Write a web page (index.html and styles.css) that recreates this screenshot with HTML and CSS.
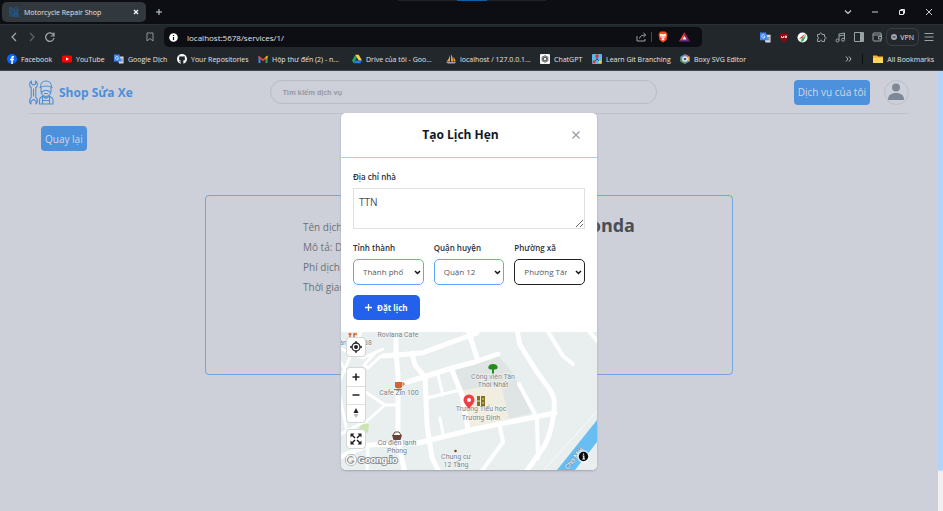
FILE: index.html
```html
<!DOCTYPE html>
<html lang="vi">
<head>
<meta charset="utf-8">
<meta name="viewport" content="width=device-width, initial-scale=1">
<title>Motorcycle Repair Shop</title>
<link rel="stylesheet" href="styles.css">
</head>
<body>
<svg class="defs" width="0" height="0" aria-hidden="true">
  <symbol id="mechanic" viewBox="0 0 25 25">
    <g fill="none" stroke="currentColor" stroke-width="1.100" stroke-linejoin="round" stroke-linecap="round">
      <path d="M2.500 1v3l2 1 2-1V1c2.500 1.500 2.500 5 .3 6.500v10c2.200 1.500 2.200 5 .2 6.500v-3l-2.500-1.500L2 21v3c-2-1.500-2-5 .2-6.500v-10C0 6 0 2.500 2.500 1z"/>
      <path d="M4.500 9v7"/>
      <path d="M11.500 7c0-3.500 2.300-6 5.500-6s5.500 2.500 5.500 6M11 7.500c4-2 8-2 12 0M12 8v3c0 3 2.200 5.500 5 5.500s5-2.500 5-5.500V8M13 12l2.500-1.500h3L21 12M15.500 13.500h3"/>
      <path d="M10.500 24v-4c0-2 2-3.300 3.500-3.800l3 2.300 3-2.300c1.500.5 4 1.800 4 3.800v4zM13.500 17v7M20.500 17v7M13.500 20.500h7"/>
    </g>
  </symbol>
  <symbol id="translate" viewBox="0 0 12 12">
    <path d="M4 3h7.500v8.500H6z" fill="#d5d9e0"/><path d="M0 .5h6.500L9 9H0z" fill="#4285f4"/>
    <path d="M5 3.600A1.800 1.800 0 1 0 5.400 5H4" fill="none" stroke="#fff" stroke-width=".8"/><path d="M8 6h3M9.700 6 9 9M9 7l2 2.500" stroke="#70757c" stroke-width=".7" fill="none"/>
  </symbol>
</svg>

<header class="browser">
  <div class="tabs">
    <div class="tab">
      <svg class="fav" viewBox="0 0 25 25"><use href="#mechanic"/></svg>
      <span class="tab-title">Motorcycle Repair Shop</span>
      <button class="plain" aria-label="Close tab"><svg width="6" height="6" viewBox="0 0 6 6"><path d="m1 1 4 4m0-4L1 5" stroke="#fff" stroke-width="1.200"/></svg></button>
    </div>
    <button class="plain" aria-label="New tab"><svg width="8" height="8" viewBox="0 0 8 8"><path d="M4 1v6M1 4h6" stroke="#d5dadd"/></svg></button>
    <div class="notch"></div>
    <div class="window-buttons">
      <button class="plain" aria-label="Search tabs"><svg width="8" height="8" viewBox="0 0 8 8"><path d="m1 2.500 3 3 3-3" fill="none" stroke="#c9cdd0" stroke-width="1.200"/></svg></button>
      <button class="plain" aria-label="Minimize"><svg width="8" height="8" viewBox="0 0 8 8"><path d="M1 4h6" stroke="#c9cdd0"/></svg></button>
      <button class="plain" aria-label="Restore"><svg width="8" height="8" viewBox="0 0 8 8"><path d="M1.500 2.500h4v4h-4zM2.500 1.500h4v4" fill="none" stroke="#e4e6e8"/></svg></button>
      <button class="plain" aria-label="Close"><svg width="8" height="8" viewBox="0 0 8 8"><path d="m1 1 6 6m0-6L1 7" stroke="#c9cdd0"/></svg></button>
    </div>
  </div>
  <div class="toolbar">
    <nav class="history" aria-label="History">
      <button class="plain" aria-label="Back"><svg width="10" height="12" viewBox="0 0 10 12"><path d="M7 2 3 6l4 4" fill="none" stroke="#a5acb0" stroke-width="1.200"/></svg></button>
      <button class="plain" aria-label="Forward"><svg width="10" height="12" viewBox="0 0 10 12"><path d="m3 2 4 4-4 4" fill="none" stroke="#5d6569" stroke-width="1.200"/></svg></button>
      <button class="plain" aria-label="Reload"><svg width="10" height="12" viewBox="0 0 10 12"><path d="M8.500 4A4.200 4.200 0 1 0 9 7M9 1.500V5H5.800" fill="none" stroke="#a5acb0" stroke-width="1.200"/></svg></button>
    </nav>
    <button class="plain" aria-label="Bookmark"><svg width="8" height="10" viewBox="0 0 8 10"><path d="M1 1h6v8L4 6.500 1 9z" fill="none" stroke="#8e969a"/></svg></button>
    <div class="address">
      <svg width="9" height="9" viewBox="0 0 9 9"><circle cx="4.500" cy="4.500" r="4.300" fill="#fff"/><path d="M4.500 4v3M4.500 2v1" stroke="#111" stroke-width="1.200"/></svg>
      <input class="url" type="text" aria-label="Address" value="localhost:5678/services/1/">
      <svg width="11" height="10" viewBox="0 0 11 10"><path d="M1 4v5h8V7M3.500 6.500C4 4 6 3 9.500 3M7.500 1l2.200 2-2.200 2" fill="none" stroke="#9ca2a6"/></svg>
      <span class="bar"></span>
      <svg width="10" height="12" viewBox="0 0 10 12"><path d="M2.500.5h5L9.500 3 8.500 9 5 11.500 1.500 9 .5 3z" fill="#f4501e"/><path d="m2 3 1.500 0L5 3.500 6.500 3 8 3 7.500 6 6 7l.5 1.500L5 9.500 3.500 8.500 4 7 2.500 6z" fill="#fff"/><path d="M3 5l1.500.5M7 5l-1.500.5M5 6v1.500" stroke="#f4501e" stroke-width=".7"/></svg>
      <svg class="bat" width="11" height="10" viewBox="0 0 11 10"><path d="M5.500 0 0 9.500l5.500-3z" fill="#ff4724"/><path d="M5.500 0 11 9.500l-5.500-3z" fill="#9e1f63"/><path d="M0 9.500h11l-5.500-3z" fill="#662d91"/><path d="m5.500 4 2 3.500h-4z" fill="#fff"/></svg>
    </div>
    <div class="extensions">
      <svg width="11" height="11"><use href="#translate"/></svg>
      <svg width="10" height="11" viewBox="0 0 10 11"><path d="M5 .5C6.500 1.500 8 1.700 9.500 1.800 9.500 6 8.500 8.500 5 10.500 1.500 8.500.5 6 .5 1.800 2 1.700 3.500 1.500 5 .5z" fill="#8d0710"/><path d="M2.500 4v1.500h2V4M6 4v1.500h1.500V4H6" fill="none" stroke="#fff" stroke-width=".8"/></svg>
      <svg width="11" height="11" viewBox="0 0 11 11"><circle cx="5.500" cy="5.500" r="5" fill="#fff"/><path d="M1.500 7.500 8 1.500 5 6z" fill="#e32020"/><path d="M9.500 2 5.500 6.500l-2 3.500 3-1z" fill="#18b838"/><path d="m3 9 5.500-7L5 7z" fill="#111"/></svg>
      <svg width="11" height="11" viewBox="0 0 11 11"><path d="M1.500 2.500h2C3 1 6 0 6 2.500h2.500V5c2-.5 2 2.500 0 2v2.500H6C6 7.500 4 7.500 4 9.500H1.500V7c1.500 0 1.500-2 0-2z" fill="none" stroke="#98a4a3"/></svg>
      <svg width="11" height="11" viewBox="0 0 11 11"><path d="M4 8.500V2l5.500-1v6.500M4 4l5.500-1" fill="none" stroke="#98a4a3"/><circle cx="2.500" cy="8.500" r="1.500" fill="none" stroke="#98a4a3"/><circle cx="8" cy="7.700" r="1.500" fill="none" stroke="#98a4a3"/></svg>
      <svg width="10" height="10" viewBox="0 0 10 10"><path d="M.5.500h9v9h-9z" fill="none" stroke="#98a4a3"/><path d="M6 1h3v8H6z" fill="#98a4a3"/></svg>
      <svg width="11" height="10" viewBox="0 0 11 10"><path d="M9 3V1H2a1 1 0 0 0-1 1v6a1 1 0 0 0 1 1h7V7M1 3h8.500v4H6.500V4.500h3" fill="none" stroke="#98a4a3"/></svg>
    </div>
    <button class="vpn"><svg width="6" height="6" viewBox="0 0 6 6"><circle cx="3" cy="3" r="3" fill="#a6a7b4"/><path d="M1.500 3h3" stroke="#22272b"/></svg>VPN</button>
    <button class="plain" aria-label="Menu"><svg width="10" height="10" viewBox="0 0 10 10"><path d="M.5 1.500h9M.5 5h9M.5 8.500h9" stroke="#98a4a3"/></svg></button>
  </div>
  <nav class="bookmarks" aria-label="Bookmarks">
    <div class="links">
      <a href="#"><svg viewBox="0 0 10 10"><circle cx="5" cy="5" r="5" fill="#0866ff"/><path d="M4.300 10V6.300H3V4.800h1.300v-1C4.300 2.400 5.200 1.800 7 2.100v1.300c-.9-.1-1.200.1-1.200.7v.7H7l-.2 1.500h-1V10z" fill="#fff"/></svg>Facebook</a>
      <a href="#"><svg viewBox="0 0 10 10"><rect y="1.500" width="10" height="7" rx="1.500" fill="#f00"/><path d="m4 3.500 3 1.500-3 1.500z" fill="#fff"/></svg>YouTube</a>
      <a href="#"><svg><use href="#translate"/></svg>Google Dịch</a>
      <a href="#"><svg viewBox="0 0 10 10"><circle cx="5" cy="5" r="5" fill="#fff"/><path d="M3.700 10V8.200c-1 .2-1.500-.3-1.800-1l1.800.3.300-.7C2.500 6.500 1.900 5.700 2 4.300L2.500 3V2l1.300.5h2.400L7.500 2v1L8 4.300c.1 1.400-.5 2.200-2 2.500l.4.900V10z" fill="#22272b"/></svg>Your Repositories</a>
      <a href="#"><svg viewBox="0 0 10 10"><path d="M.5 2v7h2V4z" fill="#4285f4"/><path d="M9.500 2v7h-2V4z" fill="#34a853"/><path d="M.5 1.500 5 5l4.500-3.500v2L5 7.200.5 3.500z" fill="#ea4335"/><path d="M7.500 3 9.500 1.500v2.200l-2 1.500z" fill="#fbbc04"/></svg>Hộp thư đến (2) - n...</a>
      <a href="#"><svg viewBox="0 0 10 10"><path d="M3.300.8 0 6.500l1.700 2.700L5 3.500z" fill="#16a765"/><path d="M3.300.8h3.400L10 6.500H6.700z" fill="#ffcf48"/><path d="M3.400 6.500H10L8.300 9.200H1.700z" fill="#2878ee"/></svg>Drive của tôi - Goo...</a>
      <a href="#"><svg viewBox="0 0 10 10"><path d="M4 1C3.500 3.500 2 6 .5 7.500H4zM5 .5v7h2C7 4.500 6.300 2 5 .5zM7.500 3v4.500h2C9.400 5.800 8.500 4 7.500 3z" fill="#f3a33d"/><path d="M0 8h10L8.700 9.500H2z" fill="#a5a2bc"/></svg>localhost / 127.0.0.1...</a>
      <a href="#"><svg viewBox="0 0 10 10"><rect width="10" height="10" rx="1" fill="#f5f5f5"/><g fill="none" stroke="#333" stroke-width=".6"><ellipse cx="5" cy="5" rx="1.600" ry="3.500"/><ellipse cx="5" cy="5" rx="1.600" ry="3.500" transform="rotate(60 5 5)"/><ellipse cx="5" cy="5" rx="1.600" ry="3.500" transform="rotate(120 5 5)"/></g></svg>ChatGPT</a>
      <a href="#"><svg viewBox="0 0 10 10"><rect width="10" height="10" rx="1" fill="#58b9ed"/><path d="M5 2v3L2 8M5 5l3 3" stroke="#174d86" fill="none"/><circle cx="5" cy="2" r="1.700" fill="#e92d31"/><circle cx="2" cy="7.800" r="1.500" fill="#e92d31"/><circle cx="8" cy="7.800" r="1.500" fill="#f2cc31"/></svg>Learn Git Branching</a>
      <a href="#"><svg viewBox="0 0 10 10"><path d="m5 0 4.500 2.500v5L5 10 .5 7.500v-5z" fill="#5b8bd1"/><path d="m.5 2.500 4.500 2.500v5L.5 7.500z" fill="#57a15c"/><path d="m5 5 4.500-2.500v5z" fill="#e3bd4a"/><path d="m5 0 4.500 2.500L7 4z" fill="#dc6b57"/><circle cx="5" cy="5" r="2.800" fill="#e9ebf1"/><circle cx="5" cy="5" r="1.300" fill="#48506a"/></svg>Boxy SVG Editor</a>
    </div>
    <div class="more">
      <button class="plain" aria-label="More bookmarks"><svg width="7" height="6" viewBox="0 0 7 6"><path d="m1 .5 2 2.500-2 2.500M4 .5 6 3 4 5.500" fill="none" stroke="#b3b8bb"/></svg></button>
      <span class="bar dark"></span>
      <a href="#"><svg viewBox="0 0 10 10"><path d="M0 1.500h4l1 1h5V9H0z" fill="#f5b92d"/><path d="M0 4h10v5H0z" fill="#ffd55c"/></svg>All Bookmarks</a>
    </div>
  </nav>
</header>

<div class="viewport">
  <div class="page">
    <header class="site-header">
      <a class="brand" href="#"><svg width="25" height="25"><use href="#mechanic"/></svg>Shop Sửa Xe</a>
      <input class="search" type="search" aria-label="Tìm kiếm dịch vụ" placeholder="Tìm kiếm dịch vụ">
      <div class="account">
        <button class="primary">Dịch vụ của tôi</button>
        <button class="avatar" aria-label="Tài khoản"><svg width="16" height="18" viewBox="0 0 16 18"><circle cx="8" cy="4.500" r="4" fill="#7f8896"/><path d="M0 17c0-5 3-7 8-7s8 2 8 7z" fill="#7f8896"/></svg></button>
      </div>
    </header>
    <main class="content">
      <button class="primary back">Quay lại</button>
      <section class="service">
        <div class="facts">
          <p>Tên dịch vụ</p>
          <p>Mô tả: Dịch</p>
          <p>Phí dịch vụ</p>
          <p>Thời gian</p>
        </div>
        <h1>Honda</h1>
      </section>
    </main>
    <div class="overlay">
      <div class="modal" role="dialog" aria-labelledby="modal-title">
        <div class="modal-head">
          <h2 id="modal-title">Tạo Lịch Hẹn</h2>
          <button class="plain" aria-label="Đóng"><svg width="8" height="8" viewBox="0 0 8 8"><path d="m.5.5 7 7m0-7-7 7" stroke="#959ba6" stroke-width="1.200"/></svg></button>
        </div>
        <form class="form">
          <div class="field home">
            <label for="address">Địa chỉ nhà</label>
            <textarea id="address">TTN</textarea>
          </div>
          <div class="places">
            <div class="field">
              <label for="city">Tỉnh thành</label>
              <div class="select"><select id="city"><option>Thành phố</option></select><svg width="7" height="5" viewBox="0 0 7 5"><path d="m1 1 2.500 2.500L6 1" fill="none" stroke="#111" stroke-width="1.500"/></svg></div>
            </div>
            <div class="field">
              <label for="district">Quận huyện</label>
              <div class="select"><select id="district"><option>Quận 12</option></select><svg width="7" height="5" viewBox="0 0 7 5"><path d="m1 1 2.500 2.500L6 1" fill="none" stroke="#111" stroke-width="1.500"/></svg></div>
            </div>
            <div class="field">
              <label for="ward">Phường xã</label>
              <div class="select current"><select id="ward"><option>Phường Tân</option></select><svg width="7" height="5" viewBox="0 0 7 5"><path d="m1 1 2.500 2.500L6 1" fill="none" stroke="#111" stroke-width="1.500"/></svg></div>
            </div>
          </div>
          <button class="submit" type="button"><svg width="7" height="7" viewBox="0 0 7 7"><path d="M3.500 0v7M0 3.500h7" stroke="#fff" stroke-width="1.300"/></svg>Đặt lịch</button>
        </form>
        <div class="map">
          <svg class="map-art" viewBox="0 0 256 138" preserveAspectRatio="xMidYMid slice">
            <rect width="256" height="138" fill="#e9efef"/>
            <path d="m113 35 44-12 14 17 20 41-64 16z" fill="#dfe5e5"/>
            <path d="m118 59 42-7 8 35-41 10z" fill="#f1eee1"/>
            <path d="M19 92h9l-1 9-9-2z" fill="#cbe5b0"/>
            <g fill="none" stroke="#fff" stroke-width="5" stroke-linejoin="round" stroke-linecap="round">
              <path d="M55-2v22l2 23v57l2 20 5 20M42 24l39-3 55-20M57 53l54-17 23-6 23-8M-3 126l30-13 50-2 57-14 80-16"/>
              <path d="m71 21 3 12 10 12 2 48 5 33 7 14M111 38l10 25 6 35M127-2l9 28M176-2l3 15 17 27c10 14 16 20 17 28s0 11-1 18-4 19-8 27l-19 27"/>
              <path d="m178 52 18 34 1 40M159 95l3 15-22 30M206-2l16 26 10 8M247-2l12 14" stroke-width="4"/>
              <path d="m97 43 5 20M86 66l33-8M99 86l3 16M-2 28l16 25 30 20h12M44 73 27 88l-29 15M21-2-2 50M-2 16l24 10 20-9M27 36l13-12M27 36l-4-3 12-13M27 113l-1 27M-2 60l8 40" stroke-width="3"/>
            </g>
            <path d="m202 139 56-62" stroke="#f8fafa"/>
            <path d="m216 138 40-50v22l-22 28z" fill="#68bdf2"/>
            <g class="places-text" text-anchor="middle">
              <text x="57" y="5">Roviana Cafe</text><text x="2" y="13">án</text><text x="27" y="13">38</text>
              <text x="58" y="63">Cafe Zin 100</text>
              <text x="56" y="113">Cơ điện lạnh</text><text x="56" y="121">Phong</text>
              <text x="115" y="127">Chung cư</text><text x="115" y="135">12 Tầng</text>
              <text x="152" y="47">Công viên Tân</text><text x="152" y="55">Thới Nhất</text>
              <text x="140" y="79">Trường Tiểu học</text><text x="140" y="88">Trương Định</text>
              <text class="river" x="235" y="128" transform="rotate(-51 235 128)">Chợ Mới</text>
            </g>
            <path d="M9 1v6M13 1v6M7.500 2h3M13 2h3" stroke="#dc632d" stroke-width="1.500"/>
            <path d="M54 50h7v5c-2 2-5 2-7 0z" fill="#d7642c"/><path d="M61 51h2v2h-2M53 57.500h8" fill="none" stroke="#d7642c"/>
            <path d="m52 103 2-3h4l2 3" fill="none" stroke="#684333"/><path d="M51 103h10l-1.500 5h-7z" fill="#684333"/>
            <circle cx="114.500" cy="119" r="1.300" fill="#82432e"/>
            <path d="M151 41.500v-4c-3 .5-4-1-3.500-3 .5-1.500 2-2.500 4.500-2.500s4 1 4.500 2.500c.5 2-1 3.500-3.500 3v4z" fill="#258b1d"/>
            <path d="M136 64h3v10h-3zM140 64h4v10h-4z" fill="#83711d"/><path d="M136 69h3M142 66v2M142 70v2" stroke="#eee0a0"/>
            <path d="M128 77c-3-4-5.500-6-5.500-9a5.500 5.500 0 0 1 11 0c0 3-2.500 5-5.500 9z" fill="#ed4047"/><circle cx="128" cy="68" r="2" fill="#fff"/>
          </svg>
          <div class="controls">
            <div class="group"><button aria-label="Vị trí của tôi"><svg width="12" height="12" viewBox="0 0 12 12"><circle cx="6" cy="6" r="4" fill="none" stroke="#222" stroke-width="1.300"/><circle cx="6" cy="6" r="2" fill="#222"/><path d="M6 0v2M6 10v2M0 6h2M10 6h2" stroke="#222" stroke-width="1.300"/></svg></button></div>
            <div class="group zoom">
              <button aria-label="Phóng to"><svg width="8" height="8" viewBox="0 0 8 8"><path d="M4 .5v7M.5 4h7" stroke="#222" stroke-width="1.600"/></svg></button>
              <button aria-label="Thu nhỏ"><svg width="8" height="8" viewBox="0 0 8 8"><path d="M.5 4h7" stroke="#222" stroke-width="1.600"/></svg></button>
              <button aria-label="Hướng bắc"><svg width="6" height="12" viewBox="0 0 6 12"><path d="m3 1 2.500 5h-5z" fill="#222"/><path d="m3 11 2.500-4h-5z" fill="#bbb"/></svg></button>
            </div>
            <div class="group"><button aria-label="Toàn màn hình"><svg width="12" height="12" viewBox="0 0 12 12"><path d="M.5 4.500v-4h4zM7.500.5h4v4zM11.500 7.500v4h-4zM4.500 11.500h-4v-4z" fill="#222"/><path d="m2 2 3 3M10 2 7 5M10 10 7 7M2 10l3-3" stroke="#222" stroke-width="1.500"/></svg></button></div>
          </div>
          <a class="goong" href="#"><svg width="12" height="12" viewBox="0 0 12 12"><circle cx="6" cy="6" r="5.500" fill="#f4f4f4" stroke="#777" stroke-width=".8"/><path d="M8.500 4A3.300 3.300 0 1 0 9 7H6.500" fill="none" stroke="#777"/></svg>Goong.io</a>
          <button class="info plain" aria-label="Thông tin"><svg width="13" height="13" viewBox="0 0 13 13"><circle cx="6.500" cy="6.500" r="6.500" fill="#fff" opacity=".6"/><circle cx="6.500" cy="6.500" r="4.700" fill="#0a0a0a"/><path d="M5.500 6h1.300v3M5.300 9h2.800M6.500 3.500v1.300" fill="none" stroke="#fff" stroke-width="1.200"/></svg></button>
        </div>
      </div>
    </div>
  </div>
  <div class="scroll"><div class="thumb"></div></div>
</div>
</body>
</html>
```
FILE: styles.css
```css
* { box-sizing: border-box; }
body {
  margin: 0;
  height: 100vh;
  display: flex;
  flex-direction: column;
  overflow: hidden;
  font-family: "Open Sans", "Noto Sans", sans-serif;
  font-size: 10px;
  color: #6b7078;
}
button, input, select, textarea { font: inherit; color: inherit; margin: 0; }
a { color: inherit; text-decoration: none; }
svg { flex: none; display: block; }
h1, h2, p { margin: 0; }
.defs { position: absolute; }
.plain { display: flex; padding: 0; border: 0; background: none; }

/* Browser window */
.browser { flex: none; background: #22272b; color: #e2e4e6; font-size: 7px; border-bottom: 1px solid #45464f; }
.tabs { position: relative; height: 24px; display: flex; align-items: center; gap: 9px; padding: 0 10px 0 2px; background: #0d0e13; }
.tab { display: flex; align-items: center; width: 144px; height: 20px; padding: 0 7px; gap: 5px; border-radius: 5px; background: #32393e; }
.fav { width: 10px; height: 10px; color: #1673d8; }
.tab-title { flex: 1; white-space: nowrap; }
.notch { position: absolute; top: 0; left: 50%; width: 148px; height: 1px; margin-left: -74px; background: linear-gradient(90deg, #202225 40%, #0960a8 40% 60%, #202225 60%); }
.window-buttons { display: flex; gap: 19px; margin-left: auto; }
.toolbar { display: flex; align-items: center; height: 24px; padding: 1px 9px 0; border-top: 1px solid #2a2f34; }
.history { display: flex; gap: 8px; margin-right: 91px; }
.address { flex: 1; display: flex; align-items: center; height: 20px; margin: 0 58px 0 10px; padding: 0 12px 0 5px; border-radius: 5px; background: #0d0e13; }
.url { flex: 1; min-width: 0; margin-left: 9px; padding: 0; border: 0; background: none; font-size: 8px; outline: 0; }
.bar { width: 1px; height: 10px; margin: 0 6px 0 4px; background: #44484c; }
.bar.dark { margin: 0; background: #0d0e13; }
.bat { margin-left: 11px; }
.extensions { display: flex; align-items: center; gap: 8px; }
.vpn { display: flex; align-items: center; gap: 3px; height: 18px; margin: 0 5px 0 3px; padding: 0 4px; border: 1px solid #3b4146; border-radius: 6px; background: none; }
.bookmarks { display: flex; align-items: center; justify-content: space-between; height: 22px; padding: 0 9px 0 7px; }
.links { display: grid; grid-template-columns: 55px 52px 63px 81px 94px 94px 94px 52px 88px auto; }
.bookmarks a { display: flex; align-items: center; gap: 4px; white-space: nowrap; }
.bookmarks a svg { width: 10px; height: 10px; }
.more { display: flex; align-items: center; gap: 10px; }

/* Page */
.viewport { flex: 1; min-height: 0; display: flex; }
.page { position: relative; flex: 1; background: #cdd0d8; }
.scroll { width: 5px; background: #f0f0f2; }
.thumb { height: 91%; border-radius: 0 0 3px 3px; background: #b0d4fc; }
.site-header { display: flex; justify-content: space-between; align-items: center; height: 43px; margin: 0 29px; border-bottom: 1px solid #bfc2ca; }
.brand { display: flex; align-items: center; gap: 5px; color: #4b8fdc; font-size: 12px; font-weight: 700; }
.search { width: 44%; height: 24px; padding: 0 12px; border: 1px solid #b9bcc5; border-radius: 12px; background: none; font-size: 7px; font-weight: 700; }
.search::placeholder { color: #979ba6; opacity: 1; }
.account { display: flex; align-items: center; gap: 14px; }
.primary { height: 25px; padding: 0 4px; border: 0; border-radius: 4px; background: #4d90dc; color: #d3d9e3; white-space: nowrap; }
.avatar { display: grid; place-items: center; width: 25px; height: 25px; padding: 0; border: 1px solid #bcbfc7; border-radius: 50%; background: none; }
.content { padding: 12px 41px; }
.back { display: block; }
.service { display: grid; grid-template-columns: 1fr 1fr; width: 528px; height: 180px; margin: 44px auto 0; padding: 17px 97px; border: 1px solid #75a5df; border-radius: 4px; }
.facts { padding-top: 4px; }
.facts p { line-height: 20px; }
.service h1 { color: #4a4e54; font-size: 18px; line-height: 24px; text-align: right; }

/* Appointment dialog */
.overlay { position: absolute; inset: 0; display: flex; align-items: center; justify-content: center; }
.modal { width: 256px; overflow: hidden; border-radius: 5px; background: #fff; box-shadow: 0 1px 2px #9ea3ad; color: #273142; }
.modal-head { display: grid; grid-template-columns: 1fr 8px; gap: 4px; align-items: center; height: 45px; padding: 0 17px 0 12px; border-bottom: 1px solid #a5ccfa; }
.modal-head h2 { font-size: 12px; color: #111827; text-align: center; }
.form { display: grid; gap: 10px; padding: 12px; }
.field { display: grid; gap: 4px; min-width: 0; }
.home { margin-bottom: 2px; }
.field label { font-size: 8px; line-height: 14px; font-weight: 600; white-space: nowrap; }
.field textarea { display: block; width: 100%; height: 41px; padding: 6px 5px; border: 1px solid #dfe0e2; background: #fff; color: #484c52; font-size: 10px; line-height: 14px; resize: vertical; outline: 0; }
.places { display: grid; grid-template-columns: repeat(3, 1fr); gap: 10px; }
.select { position: relative; }
.select svg { position: absolute; right: 3px; top: 11px; pointer-events: none; }
.select select { display: block; width: 100%; height: 26px; padding: 0 17px 0 9px; border: 1px solid #60a5fa; border-radius: 5px; background: #fff; color: #555a61; font-size: 8px; appearance: none; outline: 0; }
.select.current select { border-color: #222; }
.submit { display: flex; align-items: center; gap: 5px; justify-self: start; height: 25px; padding: 0 12px; border: 0; border-radius: 5px; background: #2360eb; color: #fff; font-size: 8px; font-weight: 700; }
.map { position: relative; height: 138px; overflow: hidden; }
.map-art { width: 100%; height: 100%; }
.places-text { font-family: Roboto, sans-serif; font-size: 7px; fill: #777f86; stroke: #f7fafa; stroke-width: 1px; paint-order: stroke; }
.river { fill: #e5f3fc; stroke: #8399ab; }
.controls { position: absolute; top: 6px; left: 6px; display: grid; gap: 12px; }
.group { border-radius: 3px; background: #fff; box-shadow: 0 0 0 1px #d3d8d8; }
.group:last-child { margin-top: -4px; }
.group button { display: grid; place-items: center; width: 18px; height: 18px; padding: 0; border: 0; background: none; }
.group button + button { border-top: 1px solid #ddd; }
.goong { position: absolute; left: 4px; bottom: 4px; display: flex; align-items: center; gap: 1px; font-family: "Liberation Sans", sans-serif; font-size: 9px; font-weight: 700; line-height: 8px; color: #fff; -webkit-text-stroke: 2px #8a9094; paint-order: stroke fill; }
.info { position: absolute; right: 7px; bottom: 7px; }
```
